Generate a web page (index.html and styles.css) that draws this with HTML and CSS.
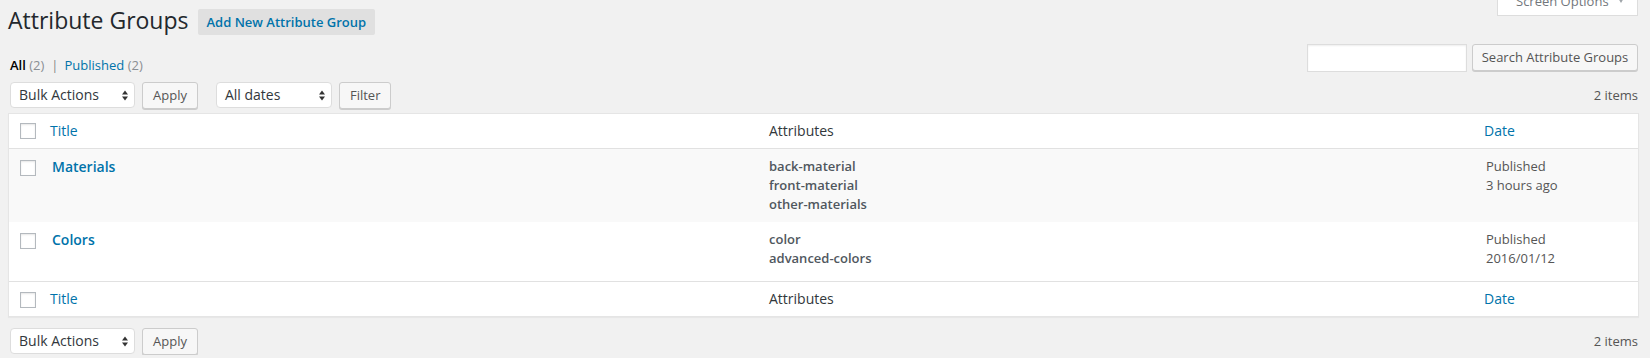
FILE: index.html
```html
<!DOCTYPE html>
<html>
<head>
<meta charset="utf-8">
<link rel="stylesheet" href="styles.css">
</head>
<body>
<div class="wrap">
  <div class="top-row">
    <div class="title-group">
      <h1 class="page-title">Attribute Groups</h1>
      <a class="page-title-action">Add New Attribute Group</a>
    </div>
    <div class="screen-options">Screen Options <span class="so-arrow"></span></div>
  </div>

  <div class="filter-row">
    <ul class="subsubsub">
      <li class="current">All <span class="count">(2)</span></li>
      <li class="sep">|</li>
      <li><a class="link">Published</a> <span class="count">(2)</span></li>
    </ul>
    <div class="search-box">
      <div class="search-input"></div>
      <div class="button search-button">Search Attribute Groups</div>
    </div>
  </div>

  <div class="tablenav tablenav-top">
    <div class="actions">
      <div class="select select-bulk"><span>Bulk Actions</span>
        <svg class="select-arrows" width="6" height="11" viewBox="0 0 6 11"><path d="M0 4.5 L3 0.5 L6 4.5 Z M0 6.5 L3 10.5 L6 6.5 Z" fill="#333"/></svg>
      </div>
      <div class="button">Apply</div>
    </div>
    <div class="actions">
      <div class="select select-dates"><span>All dates</span>
        <svg class="select-arrows" width="6" height="11" viewBox="0 0 6 11"><path d="M0 4.5 L3 0.5 L6 4.5 Z M0 6.5 L3 10.5 L6 6.5 Z" fill="#333"/></svg>
      </div>
      <div class="button">Filter</div>
    </div>
    <div class="displaying-num">2 items</div>
  </div>

  <table class="widefat">
    <colgroup>
      <col class="col-check">
      <col>
      <col>
      <col class="col-date">
    </colgroup>
    <thead>
      <tr>
        <th class="check-column"><span class="checkbox"></span></th>
        <th class="sortable"><a class="link">Title</a></th>
        <th class="plain">Attributes</th>
        <th class="sortable"><a class="link">Date</a></th>
      </tr>
    </thead>
    <tbody>
      <tr class="alternate">
        <td class="check-column"><span class="checkbox"></span></td>
        <td class="title-cell"><a class="row-title">Materials</a><div class="row-actions"></div></td>
        <td class="attrs">
          <div>back-material</div>
          <div>front-material</div>
          <div>other-materials</div>
        </td>
        <td class="date">Published<br>3 hours ago</td>
      </tr>
      <tr>
        <td class="check-column"><span class="checkbox"></span></td>
        <td class="title-cell"><a class="row-title">Colors</a><div class="row-actions"></div></td>
        <td class="attrs">
          <div>color</div>
          <div>advanced-colors</div>
        </td>
        <td class="date">Published<br>2016/01/12</td>
      </tr>
    </tbody>
    <tfoot>
      <tr>
        <th class="check-column"><span class="checkbox"></span></th>
        <th class="sortable"><a class="link">Title</a></th>
        <th class="plain">Attributes</th>
        <th class="sortable"><a class="link">Date</a></th>
      </tr>
    </tfoot>
  </table>

  <div class="tablenav tablenav-bottom">
    <div class="actions">
      <div class="select select-bulk"><span>Bulk Actions</span>
        <svg class="select-arrows" width="6" height="11" viewBox="0 0 6 11"><path d="M0 4.5 L3 0.5 L6 4.5 Z M0 6.5 L3 10.5 L6 6.5 Z" fill="#333"/></svg>
      </div>
      <div class="button">Apply</div>
    </div>
    <div class="displaying-num">2 items</div>
  </div>
</div>
</body>
</html>
```

FILE: styles.css
```css
* { box-sizing: border-box; }

html, body {
  margin: 0;
  padding: 0;
  background: #f1f1f1;
}

body {
  font-family: "Open Sans", "Liberation Sans", sans-serif;
  font-size: 13px;
  color: #444;
  overflow: hidden;
}

.wrap {
  padding: 0 11px 0 8px;
}

.link {
  color: #0073aa;
  text-decoration: none;
}

/* top row */
.top-row {
  display: flex;
  justify-content: space-between;
  align-items: flex-start;
  height: 35px;
}

.title-group {
  display: flex;
  align-items: flex-start;
  padding-top: 6px;
}

.page-title {
  margin: 0;
  font-size: 23px;
  line-height: 29px;
  font-weight: 400;
  color: #23282d;
}

.page-title-action {
  margin: 3px 0 0 9px;
  height: 26px;
  line-height: 26px;
  padding: 0 9px;
  background: #e0e0e0;
  color: #0073aa;
  font-weight: 600;
  font-size: 13px;
  border-radius: 2px;
}

.screen-options {
  margin-top: -12px;
  height: 28px;
  width: 141px;
  margin-right: 1px;
  line-height: 26px;
  padding-left: 18px;
  background: #fff;
  border: 1px solid #ddd;
  border-top: 0;
  color: #72777c;
  font-size: 13px;
  display: flex;
  align-items: flex-start;
}

.so-arrow {
  display: inline-block;
  width: 0;
  height: 0;
  margin: 10px 0 0 9px;
  border-left: 3px solid transparent;
  border-right: 3px solid transparent;
  border-top: 5px solid #a0a5aa;
}

/* filter row */
.filter-row {
  display: flex;
  justify-content: space-between;
  align-items: flex-start;
  margin-top: 9px;
  height: 35px;
}

.subsubsub {
  list-style: none;
  margin: 7px 0 0 2px;
  padding: 0;
  display: flex;
  line-height: 28px;
  font-size: 13px;
  color: #666;
}

.subsubsub li { white-space: pre; }
.subsubsub .current { color: #000; font-weight: 600; }
.subsubsub .current .count { font-weight: 400; }
.subsubsub .count { color: #8a8f94; }
.subsubsub .sep { margin: 0 6px 0 7px; color: #888; }

.search-box {
  display: flex;
  align-items: flex-start;
  margin-right: 1px;
}

.search-input {
  width: 160px;
  height: 28px;
  background: #fff;
  border: 1px solid #ddd;
  box-shadow: inset 0 1px 2px rgba(0,0,0,.07);
  margin-right: 5px;
}

.button {
  height: 27px;
  line-height: 25px;
  padding: 0 10px;
  background: #f7f7f7;
  border: 1px solid #ccc;
  border-radius: 3px;
  box-shadow: 0 1px 0 #ccc;
  color: #555;
  font-size: 13px;
  white-space: nowrap;
}

.search-button {
  width: 166px;
  padding: 0;
  text-align: center;
}

/* tablenav */
.tablenav {
  display: flex;
  align-items: flex-start;
  height: 27px;
}

.tablenav-top { margin-top: 3px; }
.tablenav-bottom { margin-top: 11px; }

.actions {
  display: flex;
  align-items: flex-start;
  margin-left: 2px;
  margin-right: 16px;
}

.select {
  height: 26px;
  background: #fff;
  border: 1px solid #ddd;
  border-radius: 4px;
  display: flex;
  align-items: center;
  justify-content: space-between;
  padding: 0 6px 0 8px;
  color: #32373c;
  font-size: 14px;
  margin-right: 7px;
}

.select-bulk { width: 125px; }
.select-dates { width: 116px; margin-right: 7px; }

.select span { line-height: 24px; }
.select-arrows { display: block; }

.displaying-num {
  margin-left: auto;
  line-height: 26px;
  color: #555;
  font-size: 13px;
  margin-right: 1px;
}

/* table */
.widefat {
  width: 100%;
  margin-top: 4px;
  table-layout: fixed;
  border-collapse: separate;
  border-spacing: 0;
  background: #fff;
  border: 1px solid #e5e5e5;
  box-shadow: 0 1px 1px rgba(0,0,0,.04);
}

.col-check { width: 33px; }
.col-date { width: 162px; }

.widefat th {
  text-align: left;
  font-weight: 400;
  font-size: 14px;
  line-height: 18px;
  padding: 8px 10px;
  color: #32373c;
}

.widefat th.sortable { padding: 8px; }

.widefat thead th { border-bottom: 1px solid #e1e1e1; }
.widefat tfoot th { border-top: 1px solid #e1e1e1; }

.widefat th.check-column {
  padding: 9px 0 0 11px;
  vertical-align: top;
}

.widefat tfoot th.check-column { padding-top: 10px; }

.checkbox {
  display: block;
  width: 16px;
  height: 16px;
  border: 1px solid #b4b9be;
  background: #fff;
  box-shadow: inset 0 1px 2px rgba(0,0,0,.1);
}

.widefat td {
  vertical-align: top;
  padding: 8px 10px;
  line-height: 19px;
  font-size: 13px;
  color: #555;
}

.widefat td.check-column {
  padding: 11px 0 0 11px;
}

.alternate td { background: #f9f9f9; }

.row-title {
  color: #0073aa;
  font-weight: 600;
  font-size: 14px;
  line-height: 19px;
  display: block;
}

.row-actions { height: 24px; }

.attrs div {
  font-weight: 600;
  color: #50575e;
}

.date { color: #555; }
```
